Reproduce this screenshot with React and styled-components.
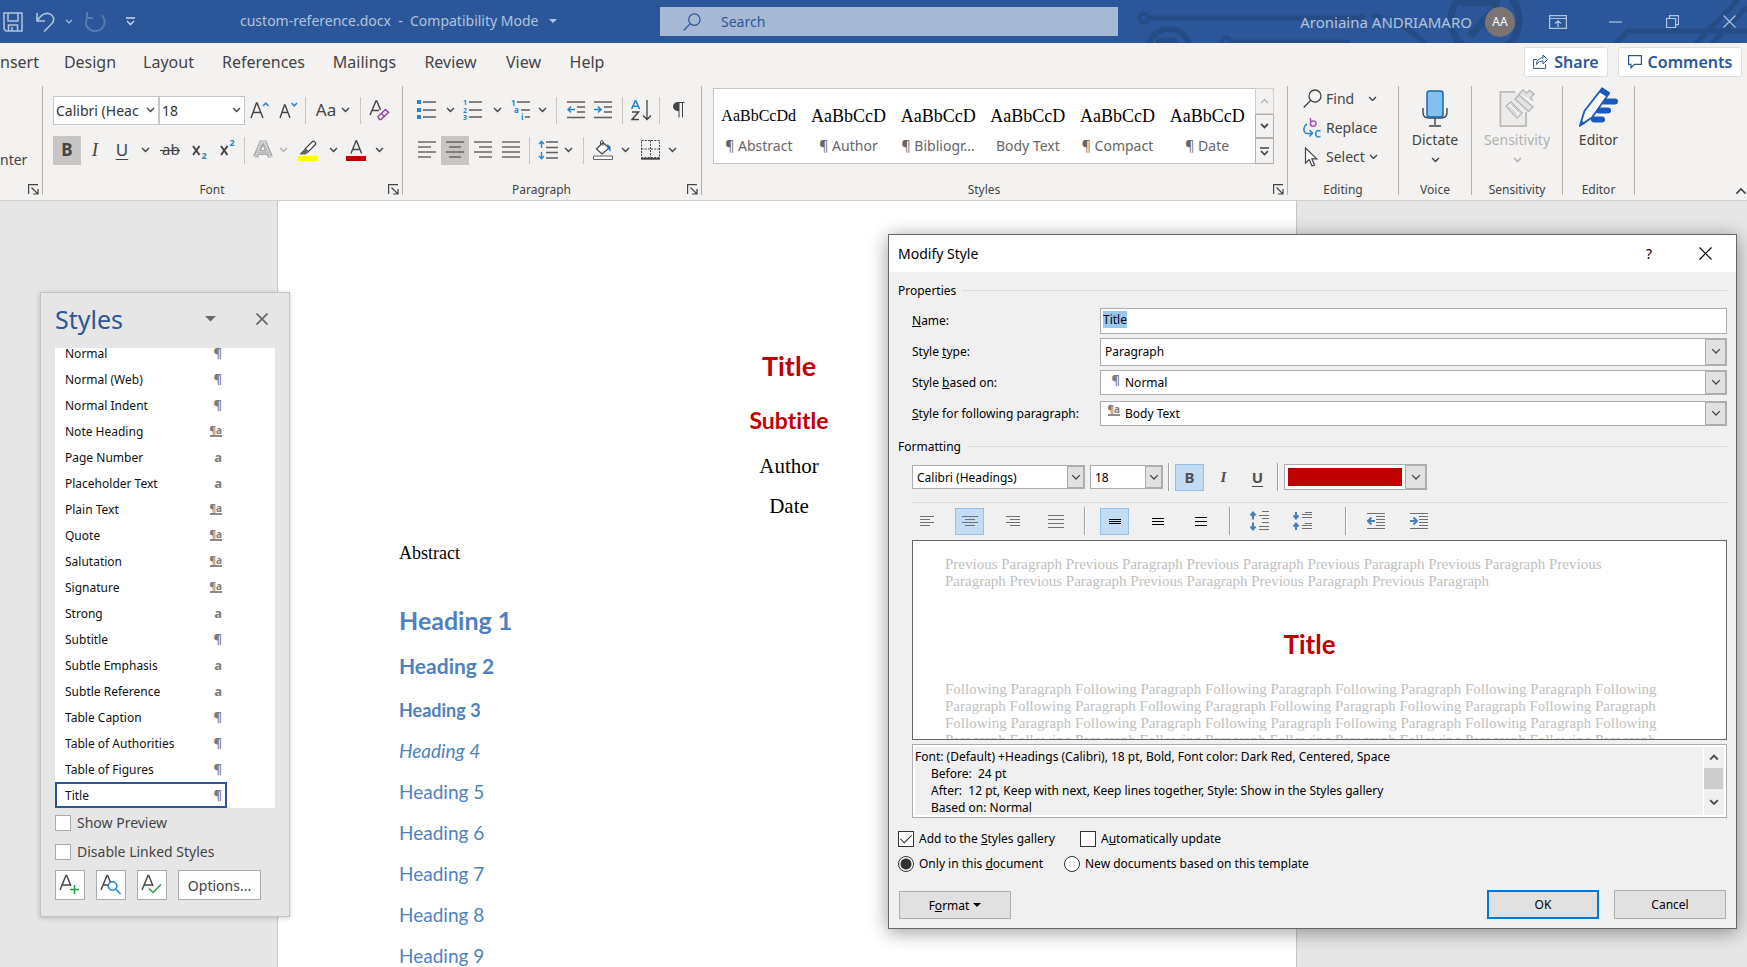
import React, { useEffect, useRef } from "react";
import styled, { createGlobalStyle, css } from "styled-components";

const ui = `"Noto Sans", "Open Sans", sans-serif`;
const serif = `"Liberation Serif", serif`;
const heading = `Lato, "Open Sans", sans-serif`;

const Global = createGlobalStyle`
  * { box-sizing: border-box; }
  body { margin: 0; font-family: ${ui}; font-size: 14px; color: #444; }
  button, input, select { font: inherit; color: inherit; margin: 0; }
  button { padding: 0; border: 0; background: none; cursor: pointer; }
  svg { display: block; flex: none; }
  ul, p, h1, h2, h3, h4, h5, h6 { margin: 0; padding: 0; font-size: inherit; font-weight: 400; }
  ul { list-style: none; }
`;

const Window = styled.div`
  display: flex;
  flex-direction: column;
  height: 100vh;
  overflow: hidden;
  background: #e6e6e6;
`;

/* ---------- title bar ---------- */

const TitleBar = styled.header`
  position: relative;
  display: grid;
  grid-template-columns: 660fr 458fr 629fr;
  align-items: center;
  height: 43px;
  flex: none;
  background: #2b579a;
  color: #b1c3dd;
  font-size: 15px;
`;

const Circuit = styled.svg`
  position: absolute;
  right: 0;
  top: 0;
`;

const QuickAccess = styled.div`
  display: flex;
  align-items: center;
  min-width: 0;
`;

const QuickButton = styled.button`
  display: flex;
  justify-content: center;
  width: ${(p) => p.$w}px;
  opacity: ${(p) => (p.$dim ? 0.35 : 1)};
`;

const FileName = styled.button`
  display: flex;
  align-items: center;
  gap: 10px;
  margin-left: 96px;
  padding-bottom: 2px;
  font-size: 14px;
  white-space: pre;
`;

const SearchBox = styled.label`
  display: flex;
  align-items: center;
  gap: 20px;
  height: 29px;
  padding-left: 23px;
  background: #a6b8d3;
  color: #2b579a;
`;

const SearchInput = styled.input`
  flex: 1;
  min-width: 0;
  border: 0;
  padding: 0;
  background: none;
  outline: 0;
  font-size: 14px;
  &::placeholder { color: #2b579a; opacity: 1; }
`;

const Account = styled.div`
  position: relative;
  display: flex;
  align-items: center;
  justify-content: flex-end;
  gap: 37px;
  padding-right: 8px;
  button { width: 20px; display: flex; justify-content: center; }
`;

const User = styled.div`
  display: flex;
  align-items: center;
  gap: 13px;
  margin-right: -4px;
  white-space: nowrap;
`;

const Avatar = styled.span`
  display: grid;
  place-items: center;
  width: 30px;
  height: 30px;
  border-radius: 50%;
  background: #7a7574;
  color: #fff;
  font-size: 12px;
`;

/* ---------- ribbon ---------- */

const TabRow = styled.nav`
  display: flex;
  align-items: center;
  flex: none;
  height: 39px;
  padding: 0 5px 2px 0;
  background: #f3f2f1;
`;

const Tab = styled.button`
  width: ${(p) => p.$w}px;
  font-size: 16px;
  text-align: ${(p) => (p.$edge ? "left" : "center")};
  white-space: nowrap;
`;

const TabActions = styled.div`
  display: flex;
  gap: 10px;
  margin-left: auto;
`;

const ActionButton = styled.button`
  display: flex;
  align-items: center;
  justify-content: center;
  gap: 6px;
  width: ${(p) => p.$w}px;
  height: 30px;
  border: 1px solid #e1dfdd;
  border-radius: 3px;
  background: #fff;
  color: #2b579a;
  font-size: 16px;
  font-weight: 600;
`;

const Ribbon = styled.div`
  display: flex;
  flex: none;
  height: 119px;
  padding: 4px 0 5px;
  background: #f3f2f1;
  border-bottom: 1px solid #d2d0ce;
`;

const Group = styled.section`
  display: flex;
  flex-direction: column;
  flex: ${(p) => (p.$w ? `0 0 ${p.$w}px` : "1 1 0")};
  min-width: 0;
  border-right: 1px solid #b3b0ad;
`;

const GroupBody = styled.div`
  flex: 1;
  min-height: 0;
  padding: ${(p) => p.$pad || "0"};
`;

const GroupFooter = styled.div`
  display: flex;
  align-items: center;
  height: 11px;
  padding: 0 3px 0 0;
`;

const GroupName = styled.span`
  flex: 1;
  text-align: center;
  font-size: 12px;
  line-height: 12px;
  padding-left: ${(p) => (p.$launch ? "0" : "3px")};
`;

const Launcher = styled.button`
  width: 18px;
  display: flex;
  justify-content: flex-end;
`;

const ToolRow = styled.div`
  display: flex;
  align-items: center;
  height: 40px;
`;

const Tool = styled.button`
  display: flex;
  align-items: center;
  justify-content: center;
  gap: 5px;
  width: ${(p) => p.$w || 28}px;
  height: 29px;
  background: ${(p) => (p.$on ? "#c8c6c4" : "none")};
`;

const Divider = styled.span`
  display: flex;
  justify-content: center;
  width: ${(p) => p.$w || 9}px;
  height: 27px;
  &::before { content: ""; width: 1px; background: #c8c6c4; }
`;

const ComboBox = styled.span`
  display: grid;
  width: ${(p) => p.$w}px;
  height: 29px;
  border: 1px solid #c8c6c4;
  background: #fff;
  color: #333;
  > * { grid-area: 1 / 1; align-self: center; }
  > svg { justify-self: end; margin-right: 3px; pointer-events: none; }
`;

const PlainSelect = styled.select`
  appearance: none;
  width: 100%;
  min-width: 0;
  border: 0;
  padding: 0 ${(p) => p.$end || 14}px 0 ${(p) => p.$start || 2}px;
  background: none;
  outline: 0;
  text-overflow: clip;
`;

const Gallery = styled.div`
  display: flex;
  height: 76px;
  margin: 2px 13px 0 11px;
  border: 1px solid #c8c6c4;
  background: #fff;
`;

const GalleryItems = styled.div`
  display: flex;
  flex: 1;
  min-width: 0;
  padding-right: 3px;
  overflow: hidden;
`;

const GalleryItem = styled.button`
  display: flex;
  flex-direction: column;
  align-items: center;
  justify-content: flex-start;
  flex: 1 0 88px;
  padding: 15px 7px 0;
  color: #666;
`;

const Sample = styled.span`
  width: 75px;
  overflow: hidden;
  white-space: nowrap;
  text-align: left;
  font: ${(p) => (p.$small ? 16 : 18)}px/24px ${serif};
  color: #000;
`;

const ItemName = styled.span`
  margin-top: 8px;
  font-size: 14px;
  line-height: 20px;
  white-space: nowrap;
`;

const GalleryScroll = styled.div`
  display: grid;
  grid-template-rows: 26px 24px 1fr;
  width: 19px;
  margin: -1px -1px -1px 0;
  button {
    display: grid;
    place-items: center;
    border: 1px solid #b3b0ad;
    background: #f3f2f1;
  }
  button:first-child { border-color: #d2d0ce; }
`;

const EditButton = styled.button`
  display: flex;
  align-items: center;
  height: 29px;
  padding-bottom: 4px;
  font-size: 14px;
  svg:first-child { margin-right: 4px; }
`;

const EditGap = styled.span`
  width: ${(p) => p.$w}px;
`;

const BigButton = styled.button`
  display: flex;
  flex-direction: column;
  align-items: center;
  width: 100%;
  font-size: 14px;
  line-height: 20px;
  color: ${(p) => (p.$off ? "#b1b0af" : "#444")};
  > span { margin: 3px 0 7px; }
`;

const Collapse = styled.button`
  display: flex;
  align-items: flex-end;
  justify-content: flex-end;
  flex: 0 0 112px;
`;

const LetterTool = styled.span`
  font-size: 17px;
  line-height: 20px;
  font-weight: ${(p) => (p.$bold ? 700 : 400)};
  ${(p) => p.$italic && `font-family: ${serif}; font-style: italic; font-size: 19px;`}
  ${(p) => p.$under && "text-decoration: underline; text-underline-offset: 3px;"}
  ${(p) => p.$dialog && "font-weight: 700; font-size: 15px; color: #505050;"}
`;

/* ---------- document ---------- */

const Workspace = styled.main`
  position: relative;
  display: grid;
  grid-template-columns: 277px minmax(0, 1020px) 1fr;
  flex: 1;
  min-height: 0;
  overflow: hidden;
`;

const Paper = styled.article`
  grid-column: 2;
  padding: 150px 117px 0 121px;
  background: #fff;
  border: solid #c6c6c6;
  border-width: 0 1px;
  color: #4f81bd;
  font: 19px/22px ${heading};
  font-variant-ligatures: none;
`;

const DocTitle = styled.h1`
  color: #c00000;
  text-align: center;
  font-size: 27px;
  font-weight: 700;
  line-height: 30px;
`;

const DocSubtitle = styled.p`
  margin-top: 26px;
  color: #c00000;
  text-align: center;
  font-size: 23px;
  font-weight: 700;
  line-height: 26px;
`;

const Meta = styled.p`
  margin-top: ${(p) => p.$mt}px;
  color: #000;
  text-align: ${(p) => (p.$left ? "left" : "center")};
  font: ${(p) => (p.$left ? 18 : 21)}px/24px ${serif};
`;

const Heading1 = styled.h1`
  margin-top: 40px;
  font-size: 25px;
  font-weight: 700;
  line-height: 30px;
`;

const Heading2 = styled.h2`
  margin-top: 18px;
  margin-bottom: 20px;
  font-size: 21px;
  font-weight: 700;
  line-height: 26px;
`;

const MinorHeading = styled.h3`
  margin-bottom: 19px;
  font-size: ${(p) => (p.$bold ? 18 : 19)}px;
  font-weight: ${(p) => (p.$bold ? 700 : 400)};
  font-style: ${(p) => (p.$italic ? "italic" : "normal")};
`;

/* ---------- styles pane ---------- */

const Pane = styled.aside`
  position: absolute;
  left: 40px;
  top: 91px;
  width: 250px;
  height: 625px;
  padding: 0 14px;
  border: 1px solid #c3c3c3;
  background: #e6e6e6;
  box-shadow: 0 1px 5px rgba(0, 0, 0, 0.2);
`;

const PaneHead = styled.div`
  display: flex;
  align-items: center;
  height: 55px;
  padding: 0 7px 3px 0;
  h2 {
    flex: 1;
    font-size: 25px;
    color: #2b579a;
  }
  button + button { margin-left: 40px; }
`;

const StyleList = styled.ul`
  display: flex;
  flex-direction: column;
  justify-content: flex-end;
  height: 460px;
  overflow: hidden;
  background: #fff;
  color: #111;
  font-size: 12px;
`;

const StyleRow = styled.li`
  display: flex;
  align-items: center;
  justify-content: space-between;
  flex: 0 0 26px;
  width: 172px;
  padding: 0 3px 0 8px;
  border: 2px solid ${(p) => (p.$selected ? "#2b579a" : "transparent")};
`;

const Mark = styled.span`
  color: #7c7c7c;
  font: bold ${(p) => (p.$kind === "¶a" ? 10 : 13)}px/${(p) => (p.$kind === "¶a" ? 9 : 13)}px ${ui};
  border-bottom: ${(p) => (p.$kind === "¶a" ? "2px solid #8a8a8a" : "0")};
`;

const PaneCheck = styled.label`
  display: flex;
  align-items: center;
  gap: 6px;
  height: 29px;
  font-size: 14px;
`;

const PaneButtons = styled.div`
  display: flex;
  gap: 11px;
  margin-top: 4px;
`;

const PaneButton = styled.button`
  display: grid;
  place-items: center;
  width: ${(p) => p.$w || 30}px;
  height: 30px;
  border: 1px solid #ababab;
  background: #fdfdfd;
  font-size: 14px;
`;

/* ---------- dialog ---------- */

const Dialog = styled.div`
  position: absolute;
  right: 10px;
  top: 33px;
  width: 849px;
  height: 695px;
  border: 1px solid #666;
  background: #f0f0f0;
  color: #000;
  font-size: 12px;
  box-shadow: 0 3px 18px rgba(0, 0, 0, 0.4);
`;

const DialogHead = styled.div`
  display: flex;
  align-items: center;
  height: 37px;
  padding: 0 24px 0 9px;
  background: #fff;
  font-size: 14px;
  h2 { flex: 1; }
  button + button { margin-left: 47px; }
`;

const DialogBody = styled.div`
  padding: 8px 9px 0;
`;

const Legend = styled.h3`
  display: flex;
  align-items: center;
  gap: 6px;
  height: 20px;
  &::after { content: ""; flex: 1; height: 1px; background: #dcdcdc; }
`;

const Fields = styled.div`
  display: grid;
  grid-template-columns: 188px 1fr;
  grid-auto-rows: 31px;
  align-items: center;
  margin: 5px 0 7px 14px;
`;

const fieldBox = css`
  height: ${(p) => p.$h}px;
  border: 1px solid #abadb3;
  background: #fff;
`;

const NameInput = styled.input`
  ${fieldBox}
  width: 100%;
  padding: 0 2px 3px;
  outline: 0;
  &::selection { background: #99c9ef; color: #000; }
`;

const DropBox = styled.span`
  ${fieldBox}
  display: grid;
  grid-template-columns: minmax(0, 1fr);
  width: ${(p) => (p.$w ? `${p.$w}px` : "100%")};
  > * { grid-area: 1 / 1; align-self: center; }
`;

const DropArrow = styled.span`
  display: grid;
  place-items: center;
  justify-self: end;
  width: ${(p) => p.$w || 21}px;
  && { align-self: stretch; }
  border: 1px solid #abadb3;
  background: #e1e1e1;
  pointer-events: none;
`;

const DropMark = styled.span`
  display: flex;
  justify-content: flex-end;
  width: 19px;
  height: 17px;
  align-items: flex-start;
  pointer-events: none;
`;

const FormatRow = styled.div`
  display: flex;
  align-items: center;
  gap: 5px;
  height: 42px;
  margin-left: 14px;
`;

const AlignRow = styled.div`
  display: flex;
  align-items: center;
  gap: 14px;
  height: 38px;
  margin: 4px 0 0 14px;
  border-top: 1px solid #dcdcdc;
  padding-bottom: 1px;
`;

const FormatTool = styled.button`
  display: grid;
  place-items: center;
  width: 29px;
  height: 27px;
  border: 1px solid ${(p) => (p.$on ? "#92c0e8" : "transparent")};
  background: ${(p) => (p.$on ? "#c1dcf3" : "none")};
`;

const FormatDivider = styled.span`
  width: 2px;
  height: 28px;
  margin-left: ${(p) => p.$ml || 0}px;
  border-left: 1px solid #a0a0a0;
  background: #fff;
`;

const ColorPicker = styled.button`
  display: flex;
  width: 143px;
  height: 26px;
  border: 1px solid #abadb3;
  background: #fff;
  > i { flex: 1; align-self: stretch; margin: 3px; background: #c00000; }
  > span { align-self: stretch; }
`;

const Preview = styled.div`
  height: 200px;
  margin-left: 14px;
  padding: 15px 52px 0 32px;
  overflow: hidden;
  border: 1px solid #666;
  background: #fff;
  color: #bfbfbf;
  font: 15px/17px ${serif};
  white-space: nowrap;
  h4 {
    margin: 38px 0 21px;
    color: #c00000;
    font: bold 26px/32px ${heading};
    font-variant-ligatures: none;
    text-align: center;
  }
`;

const Summary = styled.div`
  display: flex;
  height: 74px;
  margin: 4px 0 0 14px;
  padding: 2px;
  border: 1px solid #abadb3;
  background: #f0f0f0;
  box-shadow: inset 0 0 0 2px #fff;
  line-height: 17px;
  white-space: pre;
  > div:first-child { flex: 1; padding-top: 1px; overflow: hidden; }
`;

const SummaryLine = styled.p`
  padding-left: ${(p) => (p.$in ? 16 : 0)}px;
`;

const ScrollBar = styled.div`
  display: grid;
  grid-template-rows: 21px 21px 1fr;
  width: 21px;
  border-left: 1px solid #fff;
  button { display: grid; place-items: center; }
  i { background: #cdcdcd; margin: 0 1px 0 0; }
`;

const Options = styled.div`
  padding-top: 8px;
`;

const OptionRow = styled.div`
  display: flex;
  height: 25px;
  align-items: center;
`;

const Option = styled.label`
  display: flex;
  align-items: center;
  gap: 5px;
  width: ${(p) => (p.$w ? `${p.$w}px` : "auto")};
  white-space: nowrap;
`;

const CheckBox = styled.input`
  appearance: none;
  display: grid;
  place-items: center;
  flex: none;
  width: 16px;
  height: 16px;
  border: 1px solid ${(p) => (p.$pane ? "#ababab" : "#333")};
  background: #fff;
  &:checked::before {
    content: "";
    width: 5px;
    height: 10px;
    margin-bottom: 3px;
    border: solid #333;
    border-width: 0 1px 1px 0;
    transform: rotate(45deg);
  }
`;

const Radio = styled.input`
  appearance: none;
  flex: none;
  width: 16px;
  height: 16px;
  border: 1px solid #333;
  border-radius: 50%;
  background: #fff;
  &:checked { background: radial-gradient(circle, #333 5px, #fff 6px); }
`;

const DialogFoot = styled.div`
  display: flex;
  align-items: flex-end;
  gap: 15px;
  margin: 14px 1px 0;
`;

const PushButton = styled.button`
  display: flex;
  align-items: center;
  justify-content: center;
  gap: 4px;
  width: 112px;
  height: ${(p) => (p.$menu ? 28 : 29)}px;
  margin-right: ${(p) => (p.$menu ? "auto" : "0")};
  border: ${(p) => (p.$primary ? "2px solid #0078d7" : "1px solid #adadad")};
  background: #e1e1e1;
`;

/* ---------- icons ---------- */

const Svg = ({ w = 20, h = 20, c = "#444", sw = 1, children }) => (
  <svg width={w} height={h} viewBox={`0 0 ${w} ${h}`} fill="none" stroke={c} strokeWidth={sw} aria-hidden="true">
    {children}
  </svg>
);
const Chevron = ({ c = "#444", sw = 1.4, up, w = 9 }) => (
  <svg width={w} height={w * 0.66} viewBox="0 0 9 6" fill="none" stroke={c} strokeWidth={sw} aria-hidden="true">
    <path d={up ? "M1 5l3.500-3.500L8 5" : "M1 1l3.500 3.500L8 1"} />
  </svg>
);
const Triangle = ({ c, w = 11 }) => (
  <svg width={w} height={w / 2} viewBox="0 0 10 5" fill={c} aria-hidden="true"><path d="M0 0h10L5 5z" /></svg>
);
const LauncherIcon = () => (
  <Svg w={11} h={11} sw={1.2}><path d="M.6 10V.6H10M3.500 3.500l6 6M10 5v5H5" /></Svg>
);
const Lines = ({ rows, w = 19, h = 20, c = "#605e5c", sw = 1.4 }) => (
  <Svg w={w} h={h} c={c} sw={sw}>
    {rows.map(([x1, x2, y], i) => <path key={i} d={`M${x1} ${y}H${x2}`} />)}
  </Svg>
);
const ribbonAlign = {
  left: [[0, 18, 2], [0, 13, 7], [0, 18, 12], [0, 13, 17]],
  center: [[0, 18, 2], [3, 15, 7], [0, 18, 12], [3, 15, 17]],
  right: [[0, 18, 2], [5, 18, 7], [0, 18, 12], [5, 18, 17]],
  justify: [[0, 18, 2], [0, 18, 7], [0, 18, 12], [0, 18, 17]],
};
const dialogAlign = {
  left: [[0, 14, 1.5], [0, 10, 4.5], [0, 14, 7.5], [0, 10, 10.5]],
  center: [[0, 16, 1.5], [3, 13, 4.5], [0, 16, 7.5], [3, 13, 10.5]],
  right: [[0, 14, 1.5], [4, 14, 4.5], [0, 14, 7.5], [4, 14, 10.5]],
  justify: [[0, 16, 0.5], [0, 16, 4.5], [0, 16, 8.5], [0, 16, 12.5]],
};
const tiny = { fontFamily: ui, fontWeight: 700, stroke: "none", fill: "#2488d0" };

const BulletsIcon = () => (
  <Svg w={20} h={20}>
    <path d="M0 0h4v4H0zM0 8h4v4H0zM0 15h4v4H0z" fill="#2488d0" stroke="none" />
    <path d="M6 2h13M6 10h13M6 17h13" stroke="#605e5c" strokeWidth="1.4" />
  </Svg>
);
const NumbersIcon = () => (
  <Svg w={20} h={20}>
    <g {...tiny} fontSize="7"><text x="0" y="5">1</text><text x="0" y="12.500">2</text><text x="0" y="20">3</text></g>
    <path d="M6 2h13M6 10h13M6 17h13" stroke="#605e5c" strokeWidth="1.4" />
  </Svg>
);
const MultilevelIcon = () => (
  <Svg w={20} h={20}>
    <g {...tiny} fontSize="8"><text x="0" y="5.500">1</text><text x="3" y="12.500">a</text><text x="10" y="20">i</text></g>
    <path d="M6 2h13M10 10h9M14 17h5" stroke="#605e5c" strokeWidth="1.4" />
  </Svg>
);
const IndentIcon = ({ more }) => (
  <Svg w={18} h={18}>
    <path d="M0 1h18M10 6h8M10 11h8M0 16.500h18" stroke="#605e5c" strokeWidth="1.4" />
    <path d={more ? "M0 8.500h7M4 5.500l3 3-3 3" : "M8 8.500H1M4 5.500l-3 3 3 3"} stroke="#2488d0" strokeWidth="1.5" />
  </Svg>
);
const SortIcon = () => (
  <Svg w={20} h={21}>
    <path d="M.7 9L4.300.8h.6L8.500 9M2 6.200h5.200" stroke="#2488d0" strokeWidth="1.6" />
    <path d="M1 12h6.500L1 19.500h7" strokeWidth="1.5" />
    <path d="M16 0v19M12 15.500l4 4 4-4" strokeWidth="1.3" />
  </Svg>
);
const PilcrowIcon = () => (
  <Svg w={13} h={16}>
    <path d="M6.500.5H12.500M7 .5V15.500M10.500.5V15.500" />
    <path d="M7 0C3 0 1 2 1 4.500S3 9 7 9z" fill="#444" stroke="none" />
  </Svg>
);
const SpacingIcon = () => (
  <Svg w={20} h={20}>
    <path d="M8 2h12M8 7.500h12M8 12.500h12M8 18h12" stroke="#605e5c" strokeWidth="1.4" />
    <path d="M3.500 1.500V8M1 4l2.500-2.800L6 4M3.500 18.500V12M1 16l2.500 2.800L6 16" stroke="#2488d0" strokeWidth="1.4" />
  </Svg>
);
const ShadingIcon = () => (
  <Svg w={20} h={20}>
    <path d="M3.500 9L10 2.500l6 5.500-7 6z" fill="#fff" strokeWidth="1.2" />
    <path d="M10 6V1.500c0-1.500-2.500-1.500-2.500.5v3" />
    <path d="M14 4l3.500 2.500V12l-3-4z" fill="#1f6fb5" stroke="none" />
    <path d="M.5 16h19v3.500H.5z" fill="#fff" stroke="#666" />
  </Svg>
);
const BordersIcon = () => (
  <Svg w={19} h={20}>
    <path d="M.5.5h18v17H.5zM9.500.5v17M.5 9h18" strokeDasharray="2 1.200" />
    <path d="M0 18.800h19" strokeWidth="1.8" />
  </Svg>
);
const GlyphA = ({ size, children, w = 20 }) => (
  <Svg w={w} h={22}>
    <path d={`M1 19L${size / 2} ${20 - size - 3}h.6L${size} 19M3 13.500h${size - 5}`} strokeWidth="1.4" />
    {children}
  </Svg>
);
const GrowIcon = () => <GlyphA size={13}><path d="M13 7l2.800-2.800L18.600 7" stroke="#2488d0" strokeWidth="1.6" /></GlyphA>;
const ShrinkIcon = () => <GlyphA size={11} w={19}><path d="M12.500 4l2.800 2.800L18 4" stroke="#2488d0" strokeWidth="1.6" /></GlyphA>;
const ClearIcon = () => (
  <Svg w={21} h={22}>
    <path d="M1 16L7 2h.8l3.700 9M3 11.500h7" strokeWidth="1.4" />
    <path d="M9 17.500l7.500-7 3 3-7.500 7h-1.500z" fill="#fff" stroke="#9b3fa8" strokeWidth="1.5" />
    <path d="M12.500 14.500l3 3" stroke="#9b3fa8" strokeWidth="1.4" />
  </Svg>
);
const StrikeIcon = () => (
  <Svg w={20} h={18}>
    <text x="2" y="14" fontSize="15" fontFamily={ui} fill="#444" stroke="none">ab</text>
    <path d="M0 9.500h20" strokeWidth="1.2" />
  </Svg>
);
const ScriptIcon = ({ sup }) => (
  <Svg w={16} h={24}>
    <path d="M1 8l6.500 9M7.500 8L1 17" strokeWidth="2" />
    <text x="9.500" y={sup ? 8 : 21} fontSize="9" {...tiny}>2</text>
  </Svg>
);
const EffectsIcon = () => (
  <Svg w={20} h={20} c="#a9a8a7">
    <path d="M2.500 17L8.500 3h3l6 14M5.500 12.500h9" strokeWidth="5" />
    <path d="M2.500 18L8.500 2.500h3L17.500 18M5.500 12.500h9" stroke="#e9e8e7" strokeWidth="2" />
    <path d="M2.500 18L9 3h2l6.500 15M5.500 12.500h9" stroke="#a9a8a7" strokeWidth="0.800" />
  </Svg>
);
const HighlightIcon = () => (
  <Svg w={20} h={21}>
    <path d="M7 9l7.500-7.500c1-1 4 1.500 3 3L10.500 11.500z" fill="#fff" strokeWidth="1.2" />
    <path d="M2 14l5-5 3.500 3L7.500 14z" fill="#666" stroke="#666" />
    <path d="M0 16h20v5H0z" fill="#ff0" stroke="none" />
  </Svg>
);
const FontColorIcon = () => (
  <Svg w={20} h={21}>
    <path d="M5 13.500L10 1h.6l5 12.500M7 9.500h7" strokeWidth="1.4" />
    <path d="M0 16h20v5H0z" fill="#c00000" stroke="none" />
  </Svg>
);
const SearchIcon = ({ c, s = 19 }) => (
  <svg width={s} height={s} viewBox="0 0 19 19" fill="none" stroke={c} strokeWidth="1.300" aria-hidden="true">
    <circle cx="12" cy="7" r="6" /><path d="M7.800 11.200L.7 18.500" />
  </svg>
);
const ReplaceIcon = () => (
  <Svg w={19} h={20}>
    <path d="M7.500 0v8M7.500 5.500c0-3 5.500-3.500 5.500 0s-5.500 3.500-5.500 0" stroke="#b14fb8" strokeWidth="1.500" />
    <path d="M4 6C.5 8-.5 13 3 15.500h6M6.500 12l3 3.300-3 3.300" stroke="#2488d0" strokeWidth="1.500" />
    <path d="M17.500 13c-3-1.500-4.800 0-4.800 2.800s1.800 4 4.800 2.500" stroke="#2488d0" strokeWidth="1.500" />
  </Svg>
);
const SelectIcon = () => (
  <Svg w={19} h={20}>
    <path d="M2.500 1v15l3.700-3.500L9 19l2.500-1-2.700-6.200h5z" fill="#fff" strokeWidth="1.2" />
  </Svg>
);
const MicIcon = () => (
  <Svg w={26} h={37}>
    <path d="M1 18v4.500c0 3.500 2.500 5.500 6 5.500h12c3.500 0 6-2 6-5.500V18M13 28v7M7 36h12" strokeWidth="1.400" />
    <rect x="5" y="1" width="16" height="26" rx="2.500" fill="#83beec" stroke="#1469b3" strokeWidth="1.500" />
  </Svg>
);
const SensitivityIcon = () => (
  <Svg w={36} h={38} c="#b9b8b7">
    <path d="M16 3H1.500v34H27V23" strokeWidth="1.500" fill="#ecebea" />
    <path d="M1.500 3h17L27 22v15H1.500z" fill="#ecebea" stroke="none" />
    <path d="M16 3H1.500v34H27V23" strokeWidth="1.500" />
    <path d="M7 17l5-4 11 11-5 5z" strokeWidth="1.400" fill="#f3f2f1" />
    <path d="M10 17.500l8 8M12.500 15.500l8 8" />
    <path d="M16 10l4-4 14 12-4.500 4.500zM20 5l4-4 3.500 3L30.500 1.500 35 5l-3.500 4 2.500 2.500" strokeWidth="1.500" fill="#e3e2e1" />
  </Svg>
);
const EditorIcon = () => (
  <Svg w={39} h={40}>
    <path d="M25 14.500h11M20 23.500h9M15 32.500h8" stroke="#185abd" strokeWidth="6" strokeLinecap="round" />
    <path d="M1 38.500L5.500 24 23 1.500l7 5-17 24z" fill="#fff" stroke="#185abd" strokeWidth="1.800" />
    <path d="M20 5l3.500-4.500 7.500 5L28 10z" fill="#185abd" stroke="none" />
    <path d="M1 39l1.500-5.500 4 3z" fill="#185abd" stroke="none" />
  </Svg>
);
const SpaceBeforeIcon = ({ tight }) => (
  <Svg w={20} h={20}>
    <path d={tight ? "M9 3.500h10M12 1.500h7M9 6.500h10M12 12.500h7M9 14.500h10M9 17.500h10" : "M12 .5h7M9 4.500h10M12 7.500h7M12 11.500h7M9 15.500h10M9 18.500h10"} stroke="#707070" />
    <path d={tight ? "M3 1v6M.5 4.500L3 7.500l2.500-3M3 19v-6M.5 15.500L3 12.500l2.500 3" : "M3 8.500V2M.5 4.500L3 1.500l2.500 3M3 11.500V18M.5 15.500L3 18.500l2.500-3"} stroke="#4a7eb5" strokeWidth="2" />
  </Svg>
);
const DialogIndentIcon = ({ more }) => (
  <Svg w={18} h={17}>
    <path d="M0 .5h18M9 3.500h9M9 6.500h9M9 9.500h9M9 12.500h9M0 15.500h18" stroke="#707070" />
    <path d={more ? "M0 8h6M3.500 4.500L7 8l-3.500 3.500" : "M8 8H2M4.500 4.500L1 8l3.500 3.500"} stroke="#4a7eb5" strokeWidth="2" />
  </Svg>
);
const StyleA = ({ kind }) => (
  <Svg w={22} h={22}>
    <path d="M1 16L7 1.500h.7L12 12M3 11h8" strokeWidth="1.400" />
    {kind === "new" && <path d="M11 15.500h9M15.500 11v9" stroke="#2e9a4b" strokeWidth="1.500" />}
    {kind === "inspect" && <g stroke="#2488d0" strokeWidth="1.600" fill="#fff"><circle cx="12.500" cy="12" r="4.300" /><path d="M15.500 15l5 5" /></g>}
    {kind === "manage" && <path d="M8 14.500l4 4 8-8" stroke="#2e9a4b" strokeWidth="1.500" />}
  </Svg>
);
const Cross = ({ s = 13, c = "#000", sw = 1.1 }) => (
  <svg width={s} height={s} viewBox="0 0 13 13" stroke={c} strokeWidth={sw} aria-hidden="true"><path d="M.5.5l12 12M12.500.5l-12 12" /></svg>
);

/* ---------- data ---------- */

const tabs = [["Design", 78], ["Layout", 79], ["References", 111], ["Mailings", 91], ["Review", 81], ["View", 65], ["Help", 62]];
const gallery = ["¶ Abstract", "¶ Author", "¶ Bibliogr...", "Body Text", "¶ Compact", "¶ Date"];
const styleRows = [
  ["Normal", "¶"], ["Normal (Web)", "¶"], ["Normal Indent", "¶"], ["Note Heading", "¶a"], ["Page Number", "a"],
  ["Placeholder Text", "a"], ["Plain Text", "¶a"], ["Quote", "¶a"], ["Salutation", "¶a"], ["Signature", "¶a"],
  ["Strong", "a"], ["Subtitle", "¶"], ["Subtle Emphasis", "a"], ["Subtle Reference", "a"], ["Table Caption", "¶"],
  ["Table of Authorities", "¶"], ["Table of Figures", "¶"], ["Title", "¶"],
];
const repeat = (n, words) => Array(n).fill(words).join(" ");

const RibbonGroup = ({ name, w, launch, pad, children }) => (
  <Group $w={w}>
    <GroupBody $pad={pad}>{children}</GroupBody>
    <GroupFooter>
      <GroupName $launch={launch}>{name}</GroupName>
      {launch && <Launcher aria-label={`${name || "Clipboard"} settings`}><LauncherIcon /></Launcher>}
    </GroupFooter>
  </Group>
);

const DropDown = ({ id, label, value, h, w, mark, arrow }) => (
  <DropBox $h={h} $w={w}>
    <PlainSelect id={id} aria-label={label} $start={mark ? 24 : 4} $end={22}>
      <option>{value}</option>
    </PlainSelect>
    {mark && <DropMark><Mark $kind={mark}>{mark}</Mark></DropMark>}
    <DropArrow $w={arrow}><Chevron w={10} sw={1.2} /></DropArrow>
  </DropBox>
);

function TopBar() {
  return (
    <TitleBar>
      <Circuit width="620" height="43" viewBox="1127 0 620 43" fill="none" stroke="#264c86" strokeWidth="5" aria-hidden="true">
        <circle cx="1144" cy="18" r="4.500" strokeWidth="4" />
        <path d="M1150 18h210l4-3M1232 42h118M1392 18l34 25M1372 15l10 3" />
        <circle cx="1169" cy="50" r="21" strokeWidth="6" />
        <path d="M1156 38h21v5h-21z" fill="#264c86" stroke="none" />
        <circle cx="1226" cy="42" r="4.500" strokeWidth="4" />
        <circle cx="1485" cy="20" r="34" strokeWidth="7" />
        <path d="M1470 36l26-28M1460 2h36v26" strokeWidth="8" />
        <path d="M1616 43l12-12h119M1696 43l42-43M1712 43l35-36" />
      </Circuit>
      <QuickAccess>
        <QuickButton $w={26} aria-label="Save">
          <Svg w={20} h={20} c="#b1c3dd" sw={1.5}><path d="M1 1h18v18H3l-2-2zM5 1v8h10V1M5.500 19v-6h9v6M9 19v-4" /></Svg>
        </QuickButton>
        <QuickButton $w={38} aria-label="Undo">
          <Svg w={19} h={20} c="#b1c3dd" sw={1.6}><path d="M1 1v8h8M1.500 8.500C6 1 12 0 15.500 3s2.500 7-.5 9.500L8 19.500" /></Svg>
        </QuickButton>
        <QuickButton $w={10} aria-label="Undo history"><Chevron w={8} c="#b1c3dd" /></QuickButton>
        <QuickButton $w={42} $dim aria-label="Redo">
          <Svg w={21} h={21} c="#b1c3dd" sw={1.8}><path d="M2 1v6h6M2.500 7C-2 14 4 20 10 20c8 0 13-9 7-16" /></Svg>
        </QuickButton>
        <QuickButton $w={28} aria-label="Customize">
          <Svg w={9} h={9} c="#d0dbeb" sw={1.3}><path d="M0 1h9M1 4l3.500 3.500L8 4" /></Svg>
        </QuickButton>
        <FileName>{"custom-reference.docx  -  Compatibility Mode"}<Triangle c="#b1c3dd" w={8} /></FileName>
      </QuickAccess>
      <SearchBox>
        <SearchIcon c="#2b579a" s={18} />
        <SearchInput placeholder="Search" aria-label="Search" />
      </SearchBox>
      <Account>
        <User>Aroniaina ANDRIAMARO<Avatar>AA</Avatar></User>
        <button aria-label="Ribbon display options">
          <Svg w={18} h={14} c="#b1c3dd" sw={1.2}><path d="M.6.6h16.800v12.800H.6zM.6 3.500h16.800M9 12V6M6 8.500L9 5.800l3 2.700" /></Svg>
        </button>
        <button aria-label="Minimize"><Svg w={13} h={13} c="#b1c3dd" sw={1.2}><path d="M0 7h13" /></Svg></button>
        <button aria-label="Restore"><Svg w={13} h={13} c="#b1c3dd" sw={1.2}><path d="M.6 3.500h9v9h-9zM3.500 3.500V.6h9v9h-3" /></Svg></button>
        <button aria-label="Close"><Cross c="#b1c3dd" s={13} /></button>
      </Account>
    </TitleBar>
  );
}

function RibbonArea() {
  return (
    <>
      <TabRow>
        <Tab $w={51} $edge>nsert</Tab>
        {tabs.map(([t, w]) => <Tab key={t} $w={w}>{t}</Tab>)}
        <TabActions>
          <ActionButton $w={84}>
            <Svg w={15} h={15} c="#2b579a"><path d="M4 5.500H.6v8.900h12V10M3.500 10.500c0-4 2.500-6.500 6.500-6.500V1l4.500 4.500L10 10V7c-3 0-5 1-6.500 3.500z" /></Svg>
            Share
          </ActionButton>
          <ActionButton $w={124}>
            <Svg w={14} h={14} c="#2b579a" sw={1.2}><path d="M.6.6h12.800v8.800H6.500L3 13V9.400H.6z" /></Svg>
            Comments
          </ActionButton>
        </TabActions>
      </TabRow>
      <Ribbon>
        <RibbonGroup name="" w={43} launch pad="64px 0 0">nter</RibbonGroup>
        <RibbonGroup name="Font" w={360} launch pad="4px 0 0 10px">
          <ToolRow>
            <ComboBox $w={106}>
              <PlainSelect aria-label="Font"><option>Calibri (Heac</option></PlainSelect><Chevron />
            </ComboBox>
            <ComboBox $w={86}>
              <PlainSelect aria-label="Font size"><option>18</option></PlainSelect><Chevron />
            </ComboBox>
            <Tool $w={30} aria-label="Increase font size"><GrowIcon /></Tool>
            <Tool $w={26} aria-label="Decrease font size"><ShrinkIcon /></Tool>
            <Divider />
            <Tool $w={46} aria-label="Change case"><LetterTool>Aa</LetterTool><Chevron /></Tool>
            <Divider />
            <Tool $w={28} aria-label="Clear formatting"><ClearIcon /></Tool>
          </ToolRow>
          <ToolRow>
            <Tool $on aria-label="Bold"><LetterTool $bold>B</LetterTool></Tool>
            <Tool aria-label="Italic"><LetterTool $italic>I</LetterTool></Tool>
            <Tool $w={26} aria-label="Underline"><LetterTool $under>U</LetterTool></Tool>
            <Tool $w={20} aria-label="Underline style"><Chevron /></Tool>
            <Tool $w={30} aria-label="Strikethrough"><StrikeIcon /></Tool>
            <Tool $w={30} aria-label="Subscript"><ScriptIcon /></Tool>
            <Tool $w={25} aria-label="Superscript"><ScriptIcon sup /></Tool>
            <Divider />
            <Tool aria-label="Text effects"><EffectsIcon /></Tool>
            <Tool $w={12} aria-label="Text effects menu"><Chevron c="#b1b0af" /></Tool>
            <Tool $w={38} aria-label="Highlight"><HighlightIcon /></Tool>
            <Tool $w={12} aria-label="Highlight color"><Chevron /></Tool>
            <Tool $w={34} aria-label="Font color"><FontColorIcon /></Tool>
            <Tool $w={12} aria-label="Font color menu"><Chevron /></Tool>
          </ToolRow>
        </RibbonGroup>
        <RibbonGroup name="Paragraph" w={299} launch pad="4px 0 0 10px">
          <ToolRow>
            <Tool aria-label="Bullets"><BulletsIcon /></Tool>
            <Tool $w={18} aria-label="Bullet library"><Chevron /></Tool>
            <Tool aria-label="Numbering"><NumbersIcon /></Tool>
            <Tool $w={20} aria-label="Numbering library"><Chevron /></Tool>
            <Tool aria-label="Multilevel list"><MultilevelIcon /></Tool>
            <Tool $w={14} aria-label="List library"><Chevron /></Tool>
            <Divider $w={15} />
            <Tool $w={24} aria-label="Decrease indent"><IndentIcon /></Tool>
            <Tool $w={30} aria-label="Increase indent"><IndentIcon more /></Tool>
            <Divider />
            <Tool aria-label="Sort"><SortIcon /></Tool>
            <Divider />
            <Tool aria-label="Show marks"><PilcrowIcon /></Tool>
          </ToolRow>
          <ToolRow>
            {["left", "center", "right", "justify"].map((a) => (
              <Tool key={a} $on={a === "center"} aria-label={`Align ${a}`}><Lines rows={ribbonAlign[a]} w={18} /></Tool>
            ))}
            <Divider />
            <Tool aria-label="Line spacing"><SpacingIcon /></Tool>
            <Tool $w={12} aria-label="Line spacing menu"><Chevron /></Tool>
            <Divider $w={19} />
            <Tool $w={20} aria-label="Shading"><ShadingIcon /></Tool>
            <Tool $w={24} aria-label="Shading color"><Chevron /></Tool>
            <Tool $w={26} aria-label="Borders"><BordersIcon /></Tool>
            <Tool $w={18} aria-label="Borders menu"><Chevron /></Tool>
          </ToolRow>
        </RibbonGroup>
        <RibbonGroup name="Styles" launch>
          <Gallery>
            <GalleryItems>
              {gallery.map((name, i) => (
                <GalleryItem key={name}>
                  <Sample $small={i === 0}>AaBbCcD{i === 0 && "d"}</Sample>
                  <ItemName>{name}</ItemName>
                </GalleryItem>
              ))}
            </GalleryItems>
            <GalleryScroll>
              <button aria-label="Scroll up"><Chevron up c="#b1b0af" /></button>
              <button aria-label="Scroll down"><Chevron sw={1.8} /></button>
              <button aria-label="More styles"><Svg w={9} h={9} sw={1.6}><path d="M0 1h9M1 4l3.500 3.500L8 4" /></Svg></button>
            </GalleryScroll>
          </Gallery>
        </RibbonGroup>
        <RibbonGroup name="Editing" w={111} pad="0 0 0 15px">
          <EditButton><SearchIcon c="#444" />Find<EditGap $w={14} /><Chevron /></EditButton>
          <EditButton><ReplaceIcon />Replace</EditButton>
          <EditButton><SelectIcon />Select<EditGap $w={4} /><Chevron /></EditButton>
        </RibbonGroup>
        <RibbonGroup name="Voice" w={73} pad="4px 0 0">
          <BigButton><MicIcon /><span>Dictate</span><Chevron /></BigButton>
        </RibbonGroup>
        <RibbonGroup name="Sensitivity" w={91} pad="3px 0 0">
          <BigButton $off><SensitivityIcon /><span>Sensitivity</span><Chevron c="#b1b0af" /></BigButton>
        </RibbonGroup>
        <RibbonGroup name="Editor" w={72} pad="1px 0 0">
          <BigButton><EditorIcon /><span>Editor</span></BigButton>
        </RibbonGroup>
        <Collapse aria-label="Collapse the ribbon"><Chevron up w={12} sw={1.2} /></Collapse>
      </Ribbon>
    </>
  );
}

function StylesPane() {
  return (
    <Pane aria-label="Styles">
      <PaneHead>
        <h2>Styles</h2>
        <button aria-label="Pane options"><Triangle c="#6a6a6a" /></button>
        <button aria-label="Close pane"><Cross c="#6a6a6a" sw={2} s={12} /></button>
      </PaneHead>
      <StyleList>
        {styleRows.map(([name, kind]) => (
          <StyleRow key={name} $selected={name === "Title"}>
            {name}<Mark $kind={kind}>{kind}</Mark>
          </StyleRow>
        ))}
      </StyleList>
      <PaneCheck><CheckBox type="checkbox" $pane />Show Preview</PaneCheck>
      <PaneCheck><CheckBox type="checkbox" $pane />Disable Linked Styles</PaneCheck>
      <PaneButtons>
        <PaneButton aria-label="New style"><StyleA kind="new" /></PaneButton>
        <PaneButton aria-label="Style inspector"><StyleA kind="inspect" /></PaneButton>
        <PaneButton aria-label="Manage styles"><StyleA kind="manage" /></PaneButton>
        <PaneButton $w={83}>Options...</PaneButton>
      </PaneButtons>
    </Pane>
  );
}

function ModifyStyle() {
  const name = useRef(null);
  useEffect(() => {
    name.current.focus();
    name.current.select();
  }, []);
  return (
    <Dialog role="dialog" aria-label="Modify Style">
      <DialogHead>
        <h2>Modify Style</h2>
        <button aria-label="Help">?</button>
        <button aria-label="Close"><Cross s={13} /></button>
      </DialogHead>
      <DialogBody>
        <Legend>Properties</Legend>
        <Fields>
          <label htmlFor="name"><u>N</u>ame:</label>
          <NameInput id="name" ref={name} defaultValue="Title" $h={26} />
          <label htmlFor="type">Style <u>t</u>ype:</label>
          <DropDown id="type" value="Paragraph" h={28} />
          <label htmlFor="based">Style <u>b</u>ased on:</label>
          <DropDown id="based" value="Normal" mark="¶" h={25} />
          <label htmlFor="next"><u>S</u>tyle for following paragraph:</label>
          <DropDown id="next" value="Body Text" mark="¶a" h={25} />
        </Fields>
        <Legend>Formatting</Legend>
        <FormatRow>
          <DropDown label="Font family" value="Calibri (Headings)" h={24} w={173} arrow={17} />
          <DropDown label="Size" value="18" h={24} w={73} arrow={17} />
          <FormatDivider />
          <FormatTool $on aria-label="Bold"><LetterTool $dialog>B</LetterTool></FormatTool>
          <FormatTool aria-label="Italic"><LetterTool $dialog $italic>I</LetterTool></FormatTool>
          <FormatTool aria-label="Underline"><LetterTool $dialog $under>U</LetterTool></FormatTool>
          <FormatDivider />
          <ColorPicker aria-label="Font color"><i /><DropArrow><Chevron w={10} sw={1.2} /></DropArrow></ColorPicker>
        </FormatRow>
        <AlignRow>
          {["left", "center", "right", "justify"].map((a) => (
            <FormatTool key={a} $on={a === "center"} aria-label={`Align ${a}`}>
              <Lines rows={dialogAlign[a]} w={a === "left" || a === "right" ? 14 : 16} h={13} c="#707070" sw={1} />
            </FormatTool>
          ))}
          <FormatDivider />
          {[2, 3, 4].map((g) => (
            <FormatTool key={g} $on={g === 2} aria-label={`Line spacing ${g / 2}`}>
              <Lines rows={[[0, 12, 5.5 - g], [0, 12, 5.5], [0, 12, 5.5 + g]]} w={12} h={11} c="#000" sw={1} />
            </FormatTool>
          ))}
          <FormatDivider />
          <FormatTool aria-label="Increase spacing"><SpaceBeforeIcon /></FormatTool>
          <FormatTool aria-label="Decrease spacing"><SpaceBeforeIcon tight /></FormatTool>
          <FormatDivider $ml={14} />
          <FormatTool aria-label="Decrease indent"><DialogIndentIcon /></FormatTool>
          <FormatTool aria-label="Increase indent"><DialogIndentIcon more /></FormatTool>
        </AlignRow>
        <Preview>
          <p>{repeat(5, "Previous Paragraph")} Previous</p>
          <p>Paragraph {repeat(4, "Previous Paragraph")}</p>
          <h4>Title</h4>
          <p>{repeat(5, "Following Paragraph")} Following</p>
          <p>{repeat(5, "Paragraph Following")} Paragraph</p>
          <p>{repeat(5, "Following Paragraph")} Following</p>
          <p>{repeat(5, "Paragraph Following")} Paragraph</p>
        </Preview>
        <Summary>
          <div>
            <SummaryLine>Font: (Default) +Headings (Calibri), 18 pt, Bold, Font color: Dark Red, Centered, Space</SummaryLine>
            <SummaryLine $in>{"Before:  24 pt"}</SummaryLine>
            <SummaryLine $in>{"After:  12 pt, Keep with next, Keep lines together, Style: Show in the Styles gallery"}</SummaryLine>
            <SummaryLine $in>Based on: Normal</SummaryLine>
          </div>
          <ScrollBar>
            <button aria-label="Scroll up"><Chevron up w={10} sw={1.8} c="#505050" /></button>
            <i />
            <button aria-label="Scroll down"><Chevron w={10} sw={1.8} c="#505050" /></button>
          </ScrollBar>
        </Summary>
        <Options>
          <OptionRow>
            <Option $w={182}><CheckBox type="checkbox" defaultChecked /><span>Add to the <u>S</u>tyles gallery</span></Option>
            <Option><CheckBox type="checkbox" /><span>A<u>u</u>tomatically update</span></Option>
          </OptionRow>
          <OptionRow>
            <Option $w={166}><Radio type="radio" name="scope" defaultChecked /><span>Only in this <u>d</u>ocument</span></Option>
            <Option><Radio type="radio" name="scope" />New documents based on this template</Option>
          </OptionRow>
        </Options>
        <DialogFoot>
          <PushButton $menu><span>F<u>o</u>rmat</span><Triangle c="#000" w={8} /></PushButton>
          <PushButton $primary>OK</PushButton>
          <PushButton>Cancel</PushButton>
        </DialogFoot>
      </DialogBody>
    </Dialog>
  );
}

export default function App() {
  return (
    <Window>
      <Global />
      <TopBar />
      <RibbonArea />
      <Workspace>
        <Paper>
          <DocTitle>Title</DocTitle>
          <DocSubtitle>Subtitle</DocSubtitle>
          <Meta $mt={21}>Author</Meta>
          <Meta $mt={16}>Date</Meta>
          <Meta $mt={23} $left>Abstract</Meta>
          <Heading1>Heading 1</Heading1>
          <Heading2>Heading 2</Heading2>
          {[3, 4, 5, 6, 7, 8, 9].map((n) => (
            <MinorHeading key={n} as={n > 6 ? "h6" : `h${n}`} $bold={n === 3} $italic={n === 4}>Heading {n}</MinorHeading>
          ))}
        </Paper>
        <StylesPane />
        <ModifyStyle />
      </Workspace>
    </Window>
  );
}
